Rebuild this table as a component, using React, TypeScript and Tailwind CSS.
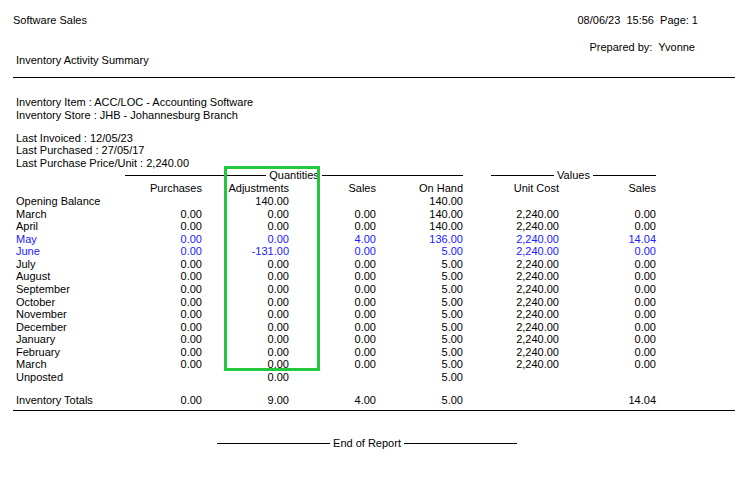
type Row = {
  label: string
  cells: string[]
  blue?: boolean
}

const rows: Row[] = [
  { label: "Opening Balance", cells: ["", "140.00", "", "140.00", "", ""] },
  { label: "March", cells: ["0.00", "0.00", "0.00", "140.00", "2,240.00", "0.00"] },
  { label: "April", cells: ["0.00", "0.00", "0.00", "140.00", "2,240.00", "0.00"] },
  { label: "May", cells: ["0.00", "0.00", "4.00", "136.00", "2,240.00", "14.04"], blue: true },
  { label: "June", cells: ["0.00", "-131.00", "0.00", "5.00", "2,240.00", "0.00"], blue: true },
  { label: "July", cells: ["0.00", "0.00", "0.00", "5.00", "2,240.00", "0.00"] },
  { label: "August", cells: ["0.00", "0.00", "0.00", "5.00", "2,240.00", "0.00"] },
  { label: "September", cells: ["0.00", "0.00", "0.00", "5.00", "2,240.00", "0.00"] },
  { label: "October", cells: ["0.00", "0.00", "0.00", "5.00", "2,240.00", "0.00"] },
  { label: "November", cells: ["0.00", "0.00", "0.00", "5.00", "2,240.00", "0.00"] },
  { label: "December", cells: ["0.00", "0.00", "0.00", "5.00", "2,240.00", "0.00"] },
  { label: "January", cells: ["0.00", "0.00", "0.00", "5.00", "2,240.00", "0.00"] },
  { label: "February", cells: ["0.00", "0.00", "0.00", "5.00", "2,240.00", "0.00"] },
  { label: "March", cells: ["0.00", "0.00", "0.00", "5.00", "2,240.00", "0.00"] },
  { label: "Unposted", cells: ["", "0.00", "", "5.00", "", ""] },
]

const widths = ["w-[85px]", "w-[87px]", "w-[87px]", "w-[87px]", "w-[96px]", "w-[97px]"]

function ReportRow({ label, cells, blue, className = "" }: Row & { className?: string }) {
  return (
    <div className={`flex h-[12.57px] leading-[12.57px] ${blue ? "text-[#2020ff]" : ""} ${className}`}>
      <div className="w-[101px] whitespace-nowrap">{label}</div>
      {cells.map((c, i) => (
        <div key={i} className={`${widths[i]} text-right`}>
          {c}
        </div>
      ))}
    </div>
  )
}

function RuledTitle({ title, className }: { title: string; className: string }) {
  return (
    <div className={`flex items-center ${className}`}>
      <div className="flex-1 h-px bg-black" />
      <span className="px-[3px]">{title}</span>
      <div className="flex-1 h-px bg-black" />
    </div>
  )
}

export default function App() {
  return (
    <div className="relative w-[742px] h-[478px] bg-white text-black text-[11px] font-['Liberation_Sans',Arial,sans-serif] overflow-hidden">
      {/* page header */}
      <div className="flex justify-between pt-[14px] pl-[13px] pr-[44px] leading-[13px]">
        <span>Software Sales</span>
        <span className="whitespace-pre">08/06/23  15:56  Page: 1</span>
      </div>
      <div className="flex justify-end pr-[47px] mt-[13.5px] leading-[13px]">
        <span className="whitespace-pre">Prepared by:  Yvonne</span>
      </div>
      <div className="pl-[16px] leading-[13px]">Inventory Activity Summary</div>
      <div className="ml-[13px] mr-[7px] mt-[10.5px] h-px bg-black" />

      {/* item details */}
      <div className="pl-[16px] mt-[17.5px] leading-[13px]">
        <div>Inventory Item : ACC/LOC - Accounting Software</div>
        <div>Inventory Store : JHB - Johannesburg Branch</div>
      </div>
      <div className="pl-[16px] mt-[10px] leading-[12.5px]">
        <div>Last Invoiced : 12/05/23</div>
        <div>Last Purchased : 27/05/17</div>
        <div>Last Purchase Price/Unit : 2,240.00</div>
      </div>

      {/* column groups */}
      <div className="flex h-[13px] leading-[13px] pl-[125px]">
        <RuledTitle title="Quantities" className="w-[338px]" />
        <div className="w-[28px]" />
        <RuledTitle title="Values" className="w-[165px]" />
      </div>

      <div className="pl-[16px]">
        <ReportRow
          label=""
          cells={["Purchases", "Adjustments", "Sales", "On Hand", "Unit Cost", "Sales"]}
          className="!h-[13px]"
        />
        {rows.map((r, i) => (
          <ReportRow key={i} {...r} />
        ))}
      </div>

      {/* totals */}
      <div className="ml-[13px] mr-[7px] mt-[11px] pl-[3px] pb-[3px] border-b border-black">
        <ReportRow label="Inventory Totals" cells={["0.00", "9.00", "4.00", "5.00", "", "14.04"]} />
      </div>

      {/* footer */}
      <div className="flex pl-[217px] mt-[26px] leading-[13px]">
        <RuledTitle title="End of Report" className="w-[300px]" />
      </div>

      {/* highlight annotation */}
      <div className="absolute left-[224px] top-[166px] w-[96px] h-[205px] border-[3px] border-[#22c93d]" />
    </div>
  )
}
